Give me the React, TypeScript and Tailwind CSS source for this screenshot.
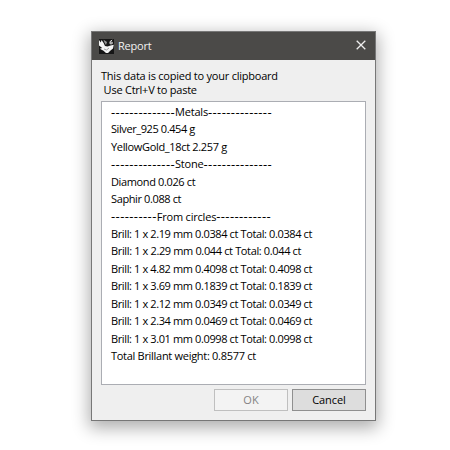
type Heading = { kind: 'heading'; label: string; before: string; after: string };
type Entry = { kind: 'entry'; text: string; tracking: string };

const lines: (Heading | Entry)[] = [
  { kind: 'heading', label: 'Metals', before: '--------------', after: '--------------' },
  { kind: 'entry', text: 'Silver_925 0.454 g', tracking: 'tracking-[-0.41px]' },
  { kind: 'entry', text: 'YellowGold_18ct 2.257 g', tracking: 'tracking-[-0.33px]' },
  { kind: 'heading', label: 'Stone', before: '--------------', after: '---------------' },
  { kind: 'entry', text: 'Diamond 0.026 ct', tracking: 'tracking-[-0.37px]' },
  { kind: 'entry', text: 'Saphir 0.088 ct', tracking: 'tracking-[-0.38px]' },
  { kind: 'heading', label: 'From circles', before: '----------', after: '------------' },
  { kind: 'entry', text: 'Brill: 1 x 2.19 mm 0.0384 ct Total: 0.0384 ct', tracking: 'tracking-[-0.38px]' },
  { kind: 'entry', text: 'Brill: 1 x 2.29 mm 0.044 ct Total: 0.044 ct', tracking: 'tracking-[-0.36px]' },
  { kind: 'entry', text: 'Brill: 1 x 4.82 mm 0.4098 ct Total: 0.4098 ct', tracking: 'tracking-[-0.38px]' },
  { kind: 'entry', text: 'Brill: 1 x 3.69 mm 0.1839 ct Total: 0.1839 ct', tracking: 'tracking-[-0.38px]' },
  { kind: 'entry', text: 'Brill: 1 x 2.12 mm 0.0349 ct Total: 0.0349 ct', tracking: 'tracking-[-0.38px]' },
  { kind: 'entry', text: 'Brill: 1 x 2.34 mm 0.0469 ct Total: 0.0469 ct', tracking: 'tracking-[-0.38px]' },
  { kind: 'entry', text: 'Brill: 1 x 3.01 mm 0.0998 ct Total: 0.0998 ct', tracking: 'tracking-[-0.38px]' },
  { kind: 'entry', text: 'Total Brillant weight: 0.8577 ct', tracking: 'tracking-[-0.29px]' },
];

function AppIcon() {
  return (
    <svg className="h-[15px] w-[15px] shrink-0" viewBox="0 0 15 15">
      <rect width="15" height="15" fill="#161616" />
      <path d="M0 1 L1.8 3.6 L2.6 1 L4.6 4 L6 7 L8.5 7.5 L11.5 6.5 L14.8 5.8 L14 9.5 L11.5 11.5 L9 14 L7 14 L4.5 11.8 L0.8 9.8 L3.2 9 L0 6.5 Z" fill="#f4f4f4" />
      <path d="M4.5 0.8 L8 3 L7 6 L5.5 3.5 Z" fill="#999" />
      <path d="M5 10 L7.5 11 L10 9" stroke="#888" strokeWidth="0.8" fill="none" />
      <path d="M13.2 1 L11 2.6 V4.8 H13.2 V3.1 H11" stroke="#ddd" strokeWidth="1" fill="none" />
    </svg>
  );
}

export default function App() {
  return (
    <div className="flex h-[450px] w-[450px] items-start overflow-hidden bg-white pl-[91px] pt-[31px] font-['Open_Sans','Noto_Sans',sans-serif] text-[11px] text-black">
      <div className="flex h-[390px] w-[285px] flex-col border border-[#777] bg-[#efefef] shadow-[0_5px_16px_2px_rgba(0,0,0,0.32)]">
        <header className="flex h-[28px] shrink-0 items-center bg-[#4b4a48] pl-[7px] pr-[9px] text-[#f2f2f2]">
          <AppIcon />
          <h1 className="ml-[4px] text-[11px] tracking-[-0.2px]">Report</h1>
          <svg className="ml-auto h-[10px] w-[10px] -translate-y-px" viewBox="0 0 10 10">
            <path d="M0.7 0.7 L9.3 9.3 M9.3 0.7 L0.7 9.3" stroke="#eee" strokeWidth="1.3" />
          </svg>
        </header>
        <main className="flex flex-1 flex-col px-[9px] pb-[9px] pt-[9px]">
          <p className="whitespace-pre leading-[14px] tracking-[-0.23px]">This data is copied to your clipboard</p>
          <p className="whitespace-pre leading-[14px] tracking-[-0.24px]"> Use Ctrl+V to paste</p>
          <div className="mt-[4px] h-[284px] border border-[#abadb3] bg-white pl-[9px] pt-[1.6px]">
            {lines.map((line, i) =>
              line.kind === 'heading' ? (
                <div key={i} className="flex h-[17.43px] items-center whitespace-pre">
                  <span className="text-[13px] leading-[15px] tracking-[0.39px]">{line.before}</span>
                  <span className="tracking-[-0.2px]">{line.label}</span>
                  <span className="text-[13px] leading-[15px] tracking-[0.39px]">{line.after}</span>
                </div>
              ) : (
                <div key={i} className={`flex h-[17.43px] items-center whitespace-pre ${line.tracking}`}>
                  {line.text}
                </div>
              ),
            )}
          </div>
          <footer className="mt-[4px] flex justify-end gap-[4px]">
            <button className="h-[22px] w-[74px] border border-[#bfbfbf] bg-[#f3f3f3] text-[#838383]" disabled>OK</button>
            <button className="h-[22px] w-[74px] border border-[#8f8f8f] bg-[#dddddd] tracking-[-0.1px]">Cancel</button>
          </footer>
        </main>
      </div>
    </div>
  );
}
